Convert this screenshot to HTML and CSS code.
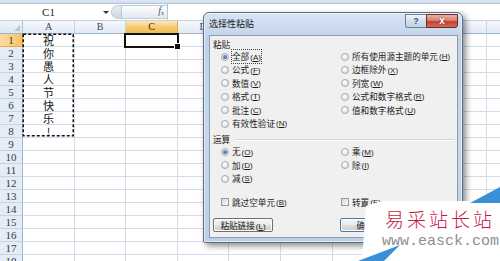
FILE: index.html
```html
<!DOCTYPE html>
<html lang="zh-CN">
<head>
<meta charset="utf-8">
<title>选择性粘贴</title>
<link rel="stylesheet" href="styles.css">
</head>
<body>
<div class="app">
  <div class="ribbon-edge"></div>
  <div class="fbar">
    <div class="namebox"><span class="nb-text">C1</span><span class="nb-arrow"></span></div>
    <div class="fb-tools"><span class="grip"></span><span class="fx"><i>f</i><sub>x</sub></span></div>
    <div class="fb-input"></div>
  </div>
  <div class="colheads">
    <div class="corner"></div>
    <div class="ch w52">A</div>
    <div class="ch w51">B</div>
    <div class="ch w52 sel">C</div>
    <div class="ch w51">D</div>
    <div class="ch w52">E</div>
    <div class="ch w52">F</div>
    <div class="ch w51">G</div>
    <div class="ch w52">H</div>
    <div class="ch w51">I</div>
    <div class="ch w52">J</div>
  </div>
  <div class="grid">
    <div class="rowheads">
      <div class="rh sel">1</div><div class="rh">2</div><div class="rh">3</div><div class="rh">4</div>
      <div class="rh">5</div><div class="rh">6</div><div class="rh">7</div><div class="rh">8</div>
      <div class="rh">9</div><div class="rh">10</div><div class="rh">11</div><div class="rh">12</div>
      <div class="rh">13</div><div class="rh">14</div><div class="rh">15</div><div class="rh">16</div>
      <div class="rh">17</div><div class="rh">18</div>
    </div>
    <div class="col w52">
      <div class="cell">祝</div><div class="cell">你</div><div class="cell">愚</div><div class="cell">人</div>
      <div class="cell">节</div><div class="cell">快</div><div class="cell">乐</div><div class="cell">!</div>
    </div>
    <div class="col w51"></div>
    <div class="col w52"></div>
    <div class="col w51"></div>
    <div class="col w52"></div>
    <div class="col w52"></div>
    <div class="col w51"></div>
    <div class="col w52"></div>
    <div class="col w51"></div>
    <div class="col w52"></div>
    <svg class="ants" width="53" height="105" viewBox="0 0 53 105"><rect x="1.25" y="1.25" width="50" height="101.5" fill="none" stroke="#111" stroke-width="1.5" stroke-dasharray="3 2"/></svg>
    <div class="selbox"></div>
  </div>

  <div class="dialog">
    <div class="titlebar">
      <span class="title">选择性粘贴</span>
      <div class="capbtns"><span class="help">?</span><span class="close">x</span></div>
    </div>
    <div class="panel">
      <div class="grp">粘贴</div>
      <div class="opts">
        <div class="opt"><span class="radio on"></span><span class="focus">全部<span class="acc">(<u>A</u>)</span></span></div>
        <div class="opt"><span class="radio"></span>所有使用源主题的单元<span class="acc">(<u>H</u>)</span></div>
        <div class="opt"><span class="radio"></span>公式<span class="acc">(<u>F</u>)</span></div>
        <div class="opt"><span class="radio"></span>边框除外<span class="acc">(<u>X</u>)</span></div>
        <div class="opt"><span class="radio"></span>数值<span class="acc">(<u>V</u>)</span></div>
        <div class="opt"><span class="radio"></span>列宽<span class="acc">(<u>W</u>)</span></div>
        <div class="opt"><span class="radio"></span>格式<span class="acc">(<u>T</u>)</span></div>
        <div class="opt"><span class="radio"></span>公式和数字格式<span class="acc">(<u>R</u>)</span></div>
        <div class="opt"><span class="radio"></span>批注<span class="acc">(<u>C</u>)</span></div>
        <div class="opt"><span class="radio"></span>值和数字格式<span class="acc">(<u>U</u>)</span></div>
        <div class="opt"><span class="radio"></span>有效性验证<span class="acc">(<u>N</u>)</span></div>
      </div>
      <div class="grp op">运算</div>
      <div class="opts">
        <div class="opt"><span class="radio on"></span>无<span class="acc">(<u>O</u>)</span></div>
        <div class="opt"><span class="radio"></span>乘<span class="acc">(<u>M</u>)</span></div>
        <div class="opt"><span class="radio"></span>加<span class="acc">(<u>D</u>)</span></div>
        <div class="opt"><span class="radio"></span>除<span class="acc">(<u>I</u>)</span></div>
        <div class="opt"><span class="radio"></span>减<span class="acc">(<u>S</u>)</span></div>
      </div>
      <div class="opts checks">
        <div class="opt"><span class="chk"></span>跳过空单元<span class="acc">(<u>B</u>)</span></div>
        <div class="opt"><span class="chk"></span>转置<span class="acc">(<u>E</u>)</span></div>
      </div>
      <div class="btnrow">
        <span class="btn">粘贴链接<span class="acc">(<u>L</u>)</span></span>
        <span class="btn ok">确定</span>
        <span class="btn cancel">取消</span>
      </div>
    </div>
  </div>

  <div class="wm">
    <svg width="144" height="96" viewBox="0 0 144 96">
      <polygon points="26,36 144,36 144,96 6,96 10,41" fill="#ffffff"/>
      <polygon points="114,38 144,22 144,38" fill="#3b8fd6"/>
      <polygon points="2,96 44,80 28,96" fill="#3b8fd6"/>
    </svg>
    <span class="wm-cn">易采站长站</span>
    <span class="wm-url">www.easck.com</span>
  </div>
</div>
</body>
</html>
```
FILE: styles.css
```css
* { box-sizing: border-box; }
body {
  margin: 0;
  background: #fff;
  font-family: "Liberation Sans", "Noto Sans CJK SC", sans-serif;
}
.app {
  position: relative;
  width: 500px;
  height: 261px;
  overflow: hidden;
  background: #fff;
}

/* ribbon edge + formula bar */
.ribbon-edge {
  height: 4px;
  background: linear-gradient(#dfe8f4, #d2deed);
  border-bottom: 1px solid #b3c5da;
}
.fbar {
  display: flex;
  height: 17px;
  background: #fff;
  border-bottom: 1px solid #c3d0df;
}
.namebox {
  width: 111px;
  flex: none;
  display: flex;
  align-items: center;
}
.nb-text {
  width: 97px;
  text-align: center;
  font: 11px/16px "Liberation Serif", serif;
  color: #222;
}
.nb-arrow {
  margin-left: 6px;
  width: 0;
  height: 0;
  border-left: 3px solid transparent;
  border-right: 3px solid transparent;
  border-top: 3px solid #333;
}
.fb-tools {
  width: 56px;
  flex: none;
  margin: 1px 0;
  display: flex;
  align-items: center;
  border: 1px solid #bccadb;
  border-right: none;
  border-radius: 8px 0 0 8px;
  background: linear-gradient(#fdfdfe, #e3e8ef);
}
.grip {
  width: 10px;
  height: 13px;
  border-radius: 7px 0 0 7px;
  background: linear-gradient(#e9eef4, #c8d2de);
  border-right: 1px solid #b9c6d6;
}
.fx {
  margin-left: auto;
  margin-right: 3px;
  font: 10px/12px "Liberation Serif", serif;
  color: #555;
}
.fx sub { font-size: 6px; vertical-align: -1px; }
.fb-input {
  flex: 1;
  border-left: 1px solid #b6c3d3;
  background: #fff;
}

/* column headers */
.colheads {
  display: flex;
  height: 13px;
}
.corner {
  position: relative;
  width: 23px;
  flex: none;
  border-right: 1px solid #b1c2d6;
  border-bottom: 1px solid #9eb6ce;
  background: linear-gradient(#eef3fa, #dde6f1);
}
.corner::after {
  content: "";
  position: absolute;
  right: 2px;
  bottom: 2px;
  border-left: 6px solid transparent;
  border-bottom: 6px solid #b6c6d9;
}
.w51 { width: 51px; flex: none; }
.w52 { width: 52px; flex: none; }
.ch {
  border-right: 1px solid #c6d3e3;
  border-bottom: 1px solid #9eb6ce;
  background: linear-gradient(#f6f9fc, #e2e9f3);
  text-align: center;
  font: 10px/12px "Liberation Serif", serif;
  color: #3b4756;
}
.ch.sel {
  background: linear-gradient(#fde7b6, #f7c86e 55%, #f3ba55);
  border-right-color: #e8a54a;
  border-bottom-color: #e39a36;
  color: #3a2a10;
}

/* grid body */
.grid {
  position: relative;
  display: flex;
}
.rowheads {
  width: 23px;
  flex: none;
}
.rh {
  height: 13px;
  border-right: 1px solid #9eb6ce;
  border-bottom: 1px solid #c6d3e3;
  background: #e4ecf7;
  text-align: center;
  font: 11px/12px "Liberation Serif", serif;
  color: #333d4a;
}
.rh.sel {
  background: linear-gradient(90deg, #fcdc9f, #f6c467);
  border-bottom-color: #e8a54a;
  border-right-color: #e39a36;
}
.col {
  height: 234px;
  border-right: 1px solid #d5dce6;
  background: repeating-linear-gradient(180deg, transparent 0 12px, #d5dce6 12px 13px);
}
.cell {
  height: 13px;
  font: 11px/13px "Noto Sans CJK SC", sans-serif;
  text-align: center;
  color: #111;
}
.ants {
  position: absolute;
  left: 22px;
  top: -1px;
}
.selbox {
  position: absolute;
  left: 124px;
  top: -1px;
  width: 55px;
  height: 15px;
  border: 2px solid #111;
}
.selbox::after {
  content: "";
  position: absolute;
  right: -4px;
  bottom: -4px;
  width: 5px;
  height: 5px;
  background: #111;
  border: 1px solid #fff;
}

/* dialog */
.dialog {
  position: absolute;
  left: 203px;
  top: 12px;
  width: 260px;
  height: 231px;
  z-index: 5;
  display: flex;
  flex-direction: column;
  border: 1px solid #5b6d84;
  border-radius: 6px 6px 2px 2px;
  background: linear-gradient(180deg, #d8e4f3 0%, #bfd2ea 12%, #c6d7ed 60%, #bccfe7 100%);
  box-shadow: inset 0 0 0 1px rgba(255,255,255,.55), 3px 3px 6px rgba(0,0,0,.45);
}
.titlebar {
  height: 22px;
  flex: none;
  display: flex;
  align-items: flex-start;
}
.title {
  padding-left: 5px;
  font: 9px/22px "Noto Sans CJK SC", sans-serif;
  color: #1b1b1b;
}
.capbtns {
  margin-left: auto;
  margin-right: 4px;
  margin-top: 1px;
  display: flex;
}
.help {
  width: 21px;
  height: 14px;
  border: 1px solid #6f8199;
  border-right: none;
  border-radius: 0 0 0 3px;
  background: linear-gradient(#f1f5fb, #d3deec 50%, #c4d3e6);
  font: bold 9px/12px "Liberation Sans", sans-serif;
  color: #3f5470;
  text-align: center;
}
.close {
  width: 32px;
  height: 14px;
  border: 1px solid #6c2b24;
  border-radius: 0 0 3px 0;
  background: linear-gradient(#eab4a8, #d9806f 45%, #c2412f 55%, #d46a55);
  color: #fff;
  font: bold 10px/11px "Liberation Sans", sans-serif;
  text-align: center;
  text-shadow: 0 0 2px #6c2b24;
}
.panel {
  flex: 1;
  margin: 0 4px 4px 5px;
  border: 1px solid #8d9db2;
  background: #f0f0f0;
  padding-top: 3px;
}
.grp {
  height: 11px;
  display: flex;
  align-items: center;
  padding-left: 3px;
  font: 8.6px/11px "Noto Sans CJK SC", sans-serif;
  color: #1b1b1b;
}
.grp.op { margin-top: 4px; }
.grp.op::after {
  content: "";
  flex: 1;
  height: 0;
  margin: 0 3px 0 5px;
  border-top: 1px solid #d6d6d6;
  border-bottom: 1px solid #fff;
}
.opts {
  display: grid;
  grid-template-columns: 120px auto;
  grid-auto-rows: 13.4px;
  padding-left: 11px;
}
.opt {
  display: flex;
  align-items: center;
  white-space: nowrap;
  font: 8.6px/13.4px "Noto Sans CJK SC", sans-serif;
  color: #1b1b1b;
}
.acc {
  margin-left: 1px;
  font: 8px "Liberation Sans", sans-serif;
}
.focus {
  outline: 1px dotted #444;
  outline-offset: 0px;
}
.radio {
  position: relative;
  flex: none;
  width: 8px;
  height: 8px;
  margin-right: 3px;
  border-radius: 50%;
  border: 1px solid #a4a9b0;
  background: radial-gradient(circle at 40% 35%, #fff, #d8d8d8);
}
.radio.on::after {
  content: "";
  position: absolute;
  left: 1px;
  top: 1px;
  width: 4px;
  height: 4px;
  border-radius: 50%;
  background: radial-gradient(circle at 40% 35%, #6f9bd0, #244a7e);
}
.checks {
  margin-top: 10px;
}
.chk {
  flex: none;
  width: 8px;
  height: 8px;
  margin-right: 3px;
  border: 1px solid #9a9a9a;
  background: linear-gradient(135deg, #d8d8d8, #fafafa);
}
.btnrow {
  display: flex;
  padding-left: 3px;
  margin-top: 9px;
}
.btn {
  height: 14px;
  width: 60px;
  flex: none;
  border: 1px solid #707070;
  border-radius: 2px;
  background: linear-gradient(#f3f3f3, #ebebeb 50%, #dddddd 51%, #cfcfcf);
  box-shadow: inset 0 0 0 1px #fcfcfc;
  font: 8.6px/12px "Noto Sans CJK SC", sans-serif;
  text-align: center;
  color: #1b1b1b;
  white-space: nowrap;
}
.btn.ok {
  margin-left: 67px;
  width: 50px;
  border-color: #3c7fb1;
}
.btn.cancel {
  margin-left: 6px;
  width: 58px;
}

/* watermark */
.wm {
  position: absolute;
  left: 356px;
  top: 165px;
  width: 144px;
  height: 96px;
  z-index: 10;
}
.wm svg {
  position: absolute;
  left: 0;
  top: 0;
}
.wm-cn {
  position: absolute;
  left: 29px;
  top: 44px;
  font: 300 19px/19px "Noto Sans CJK SC", sans-serif;
  letter-spacing: 3px;
  color: #c8163f;
  white-space: nowrap;
}
.wm-url {
  position: absolute;
  left: 26px;
  top: 69px;
  font: 15px/16px "Liberation Mono", monospace;
  color: #8e8e8e;
  white-space: nowrap;
}
```
